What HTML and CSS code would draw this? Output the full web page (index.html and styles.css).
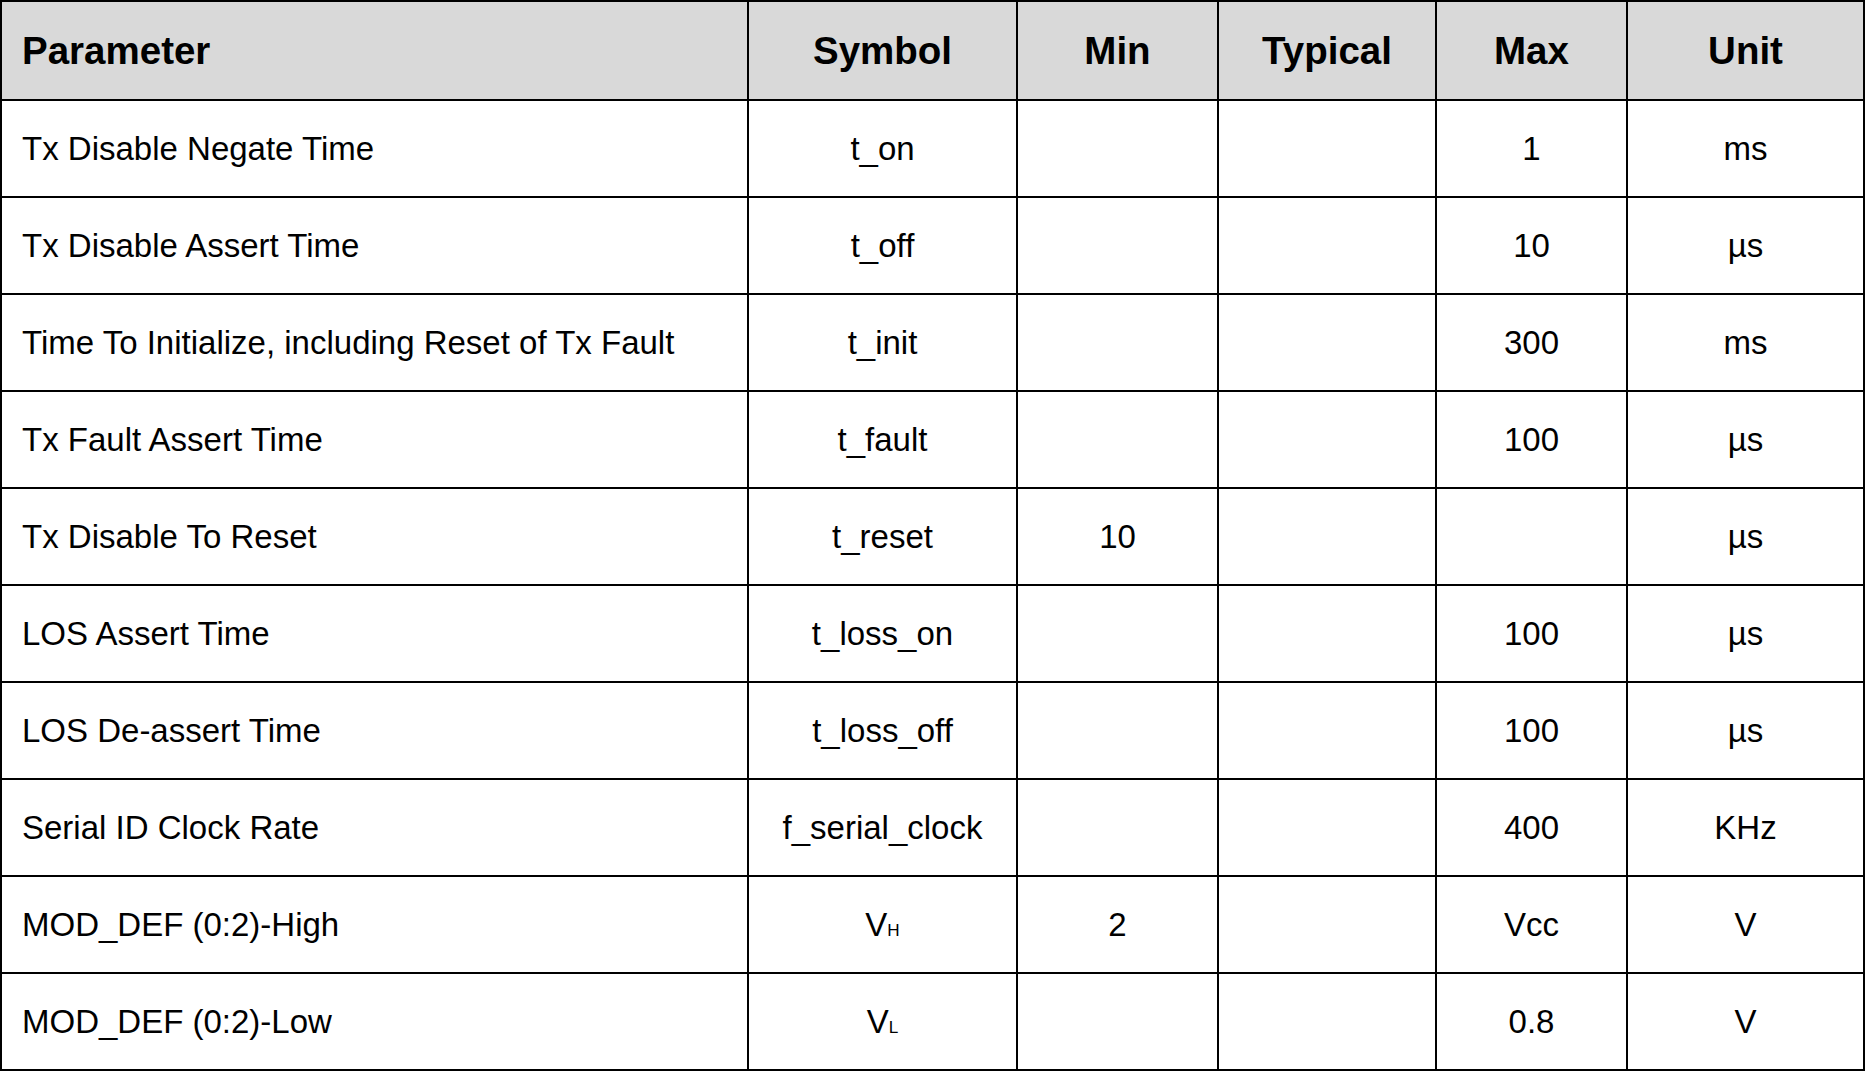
FILE: index.html
```html
<!DOCTYPE html>
<html>
<head>
<meta charset="utf-8">
<link rel="stylesheet" href="styles.css">
</head>
<body>
<table class="spec">
  <colgroup>
    <col class="c-param">
    <col class="c-sym">
    <col class="c-min">
    <col class="c-typ">
    <col class="c-max">
    <col class="c-unit">
  </colgroup>
  <thead>
    <tr class="head">
      <th class="left">Parameter</th>
      <th>Symbol</th>
      <th>Min</th>
      <th>Typical</th>
      <th>Max</th>
      <th>Unit</th>
    </tr>
  </thead>
  <tbody>
    <tr><td class="left">Tx Disable Negate Time</td><td>t_on</td><td></td><td></td><td>1</td><td>ms</td></tr>
    <tr><td class="left">Tx Disable Assert Time</td><td>t_off</td><td></td><td></td><td>10</td><td>µs</td></tr>
    <tr><td class="left">Time To Initialize, including Reset of Tx Fault</td><td>t_init</td><td></td><td></td><td>300</td><td>ms</td></tr>
    <tr><td class="left">Tx Fault Assert Time</td><td>t_fault</td><td></td><td></td><td>100</td><td>µs</td></tr>
    <tr><td class="left">Tx Disable To Reset</td><td>t_reset</td><td>10</td><td></td><td></td><td>µs</td></tr>
    <tr><td class="left">LOS Assert Time</td><td>t_loss_on</td><td></td><td></td><td>100</td><td>µs</td></tr>
    <tr><td class="left">LOS De-assert Time</td><td>t_loss_off</td><td></td><td></td><td>100</td><td>µs</td></tr>
    <tr><td class="left">Serial ID Clock Rate</td><td>f_serial_clock</td><td></td><td></td><td>400</td><td>KHz</td></tr>
    <tr><td class="left">MOD_DEF (0:2)-High</td><td>V<span class="sub">H</span></td><td>2</td><td></td><td>Vcc</td><td>V</td></tr>
    <tr><td class="left">MOD_DEF (0:2)-Low</td><td>V<span class="sub">L</span></td><td></td><td></td><td>0.8</td><td>V</td></tr>
  </tbody>
</table>
</body>
</html>
```
FILE: styles.css
```css
html, body {
  margin: 0;
  padding: 0;
  background: #ffffff;
}

.spec {
  border-collapse: collapse;
  table-layout: fixed;
  width: 1863px;
  font-family: "Liberation Sans", Arial, sans-serif;
  color: #000;
}

.c-param { width: 747px; }
.c-sym { width: 269px; }
.c-min { width: 201px; }
.c-typ { width: 218px; }
.c-max { width: 191px; }
.c-unit { width: 237px; }

.spec th,
.spec td {
  border: 2px solid #000;
  padding: 0;
  text-align: center;
  vertical-align: middle;
  font-size: 33px;
  font-weight: normal;
  white-space: nowrap;
}

.spec tbody tr {
  height: 97px;
}

.spec .head {
  height: 99px;
  background: #d9d9d9;
}

.spec .head th {
  font-weight: bold;
  font-size: 38.5px;
}

.spec .left {
  text-align: left;
  padding-left: 20px;
}

.sub {
  font-size: 0.52em;
  vertical-align: baseline;
}
```
